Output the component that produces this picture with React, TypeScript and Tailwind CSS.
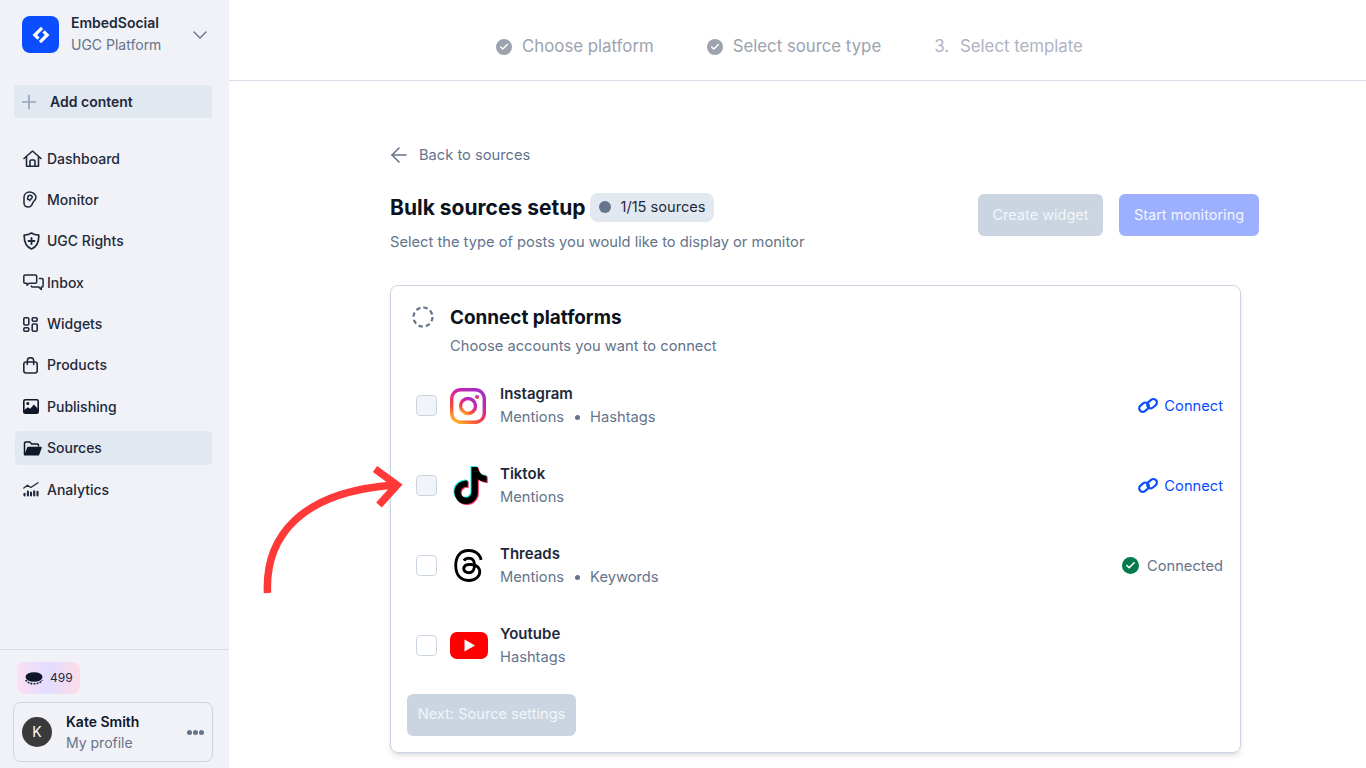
import React from "react";
import { ChevronDown, Plus, ArrowLeft, Check } from "lucide-react";
import { FaThreads, FaTiktok } from "react-icons/fa6";

const ink = "#1e293b";
const Home = () => (
  <svg width="19" height="18" viewBox="0 0 19 18" fill="none" stroke={ink} strokeWidth="1.6" strokeLinejoin="round" strokeLinecap="round">
    <path d="M1 8.500 9.500 1 18 8.500" />
    <path d="M3.500 7v9.200h12V7" />
    <path d="M7 16.200v-5a1.200 1.200 0 0 1 1.200-1.200h2.600a1.200 1.200 0 0 1 1.200 1.200v5" />
  </svg>
);
const EarIcon = () => (
  <svg width="14" height="17" viewBox="0 0 14 17" fill="none" stroke={ink} strokeWidth="1.500" strokeLinecap="round" strokeLinejoin="round">
    <path d="M1 6.500C1 3 3.500 1 6.500 1 10 1 13 3.500 13 6.500c0 2.500-1.800 3-3 4.800C9 13 9 16 5.500 16 3 16 1 14.500 1 12z" />
    <path d="M4.600 7.500C4.600 5.500 5.600 4.300 7 4.300c1.300 0 2.200.9 2.200 2 0 1.500-2.200 1.700-2.400 3.400M4.600 8.500h1.200" />
  </svg>
);
const Shield = () => (
  <svg width="17" height="18" viewBox="0 0 17 18" fill="none" stroke={ink} strokeWidth="1.700" strokeLinecap="round" strokeLinejoin="round">
    <path d="M8.500 1C6.300 2.500 4 3 1.200 3.100 1 9.800 2.800 14.600 8.500 17c5.700-2.400 7.500-7.200 7.300-13.900C13 3 10.700 2.500 8.500 1z" />
    <path d="M8.500 6v6M5.500 9h6" strokeWidth="1.900" />
  </svg>
);
const Inbox = () => (
  <svg width="21" height="17" viewBox="0 0 21 17" fill="none" stroke={ink} strokeWidth="1.500" strokeLinejoin="round" strokeLinecap="round">
    <path d="M2 1h10.500A1.200 1.200 0 0 1 13.700 2.200V8a1.200 1.200 0 0 1-1.200 1.200H6.300L4 11.300V9.200H2A1.200 1.200 0 0 1 .8 8V2.200A1.200 1.200 0 0 1 2 1z" />
    <path d="M16.500 4.500h2.400a1.200 1.200 0 0 1 1.200 1.200v6.200a1.200 1.200 0 0 1-1.200 1.200h-.6v2.400L15.800 13.100H9.500a1.200 1.200 0 0 1-1.200-1" />
  </svg>
);
const Widgets = () => (
  <svg width="15" height="15" viewBox="0 0 15 15" fill="none" stroke={ink} strokeWidth="1.600">
    <rect x="0.800" y="0.800" width="5" height="7.200" rx="1.200" />
    <rect x="0.800" y="10.700" width="5" height="3.500" rx="1.200" />
    <rect x="9.200" y="0.800" width="5" height="3.500" rx="1.200" />
    <rect x="9.200" y="7" width="5" height="7.200" rx="1.200" />
  </svg>
);
const Bag = () => (
  <svg width="15" height="17" viewBox="0 0 15 17" fill="none" stroke={ink} strokeWidth="1.600" strokeLinejoin="round">
    <rect x="0.800" y="5" width="13.400" height="11" rx="2.200" />
    <path d="M4.300 7.500V3.800a3.200 3.200 0 0 1 6.400 0v3.700" strokeLinecap="round" />
  </svg>
);
const Publishing = () => (
  <svg width="16" height="15" viewBox="0 0 16 15">
    <rect x="0.800" y="0.800" width="14.400" height="13.400" rx="1.400" fill="none" stroke="#0f172a" strokeWidth="1.600" />
    <circle cx="4.800" cy="4.600" r="1.500" fill="#0f172a" />
    <path d="M1 14v-2.800l3.800-2.900 2.300 1.500L11 5.500l4 4.500v4z" fill="#0f172a" />
  </svg>
);
const FolderOpen = () => (
  <svg width="19" height="15" viewBox="0 0 19 15">
    <path d="M1.500 14V2.200C1.500 1.500 2 1 2.700 1h4l2 2h5.600c.7 0 1.200.5 1.200 1.200V5.400" fill="none" stroke="#0f172a" strokeWidth="1.500" />
    <path d="M1 14.500 4.200 6.400c.1-.4.500-.6.900-.6h12.800c.6 0 1 .6.800 1.100l-2.600 7c-.1.400-.5.600-.9.600z" fill="#0f172a" />
  </svg>
);
const Analytics = () => (
  <svg width="16" height="15" viewBox="0 0 16 15" fill="none" stroke={ink} strokeLinecap="round">
    <path d="M.8 6 4.500 3.200 7.800 5.500 15 .8" strokeWidth="1.300" />
    <path d="M1.500 11.800v1.700M4.900 9.500v4M8 10.500v3M11.200 9.200v4.300M14.500 9.800v3.700" strokeWidth="2.100" />
  </svg>
);
const Logo = () => (
  <div className="w-[37px] h-[37px] rounded-lg bg-[#0b4dff] flex items-center justify-center shrink-0">
    <svg width="20" height="20" viewBox="0 0 20 20" fill="none" stroke="#ffffff" strokeWidth="3.200">
      <path d="M11 2.800 3.800 10 7.500 13.700" />
      <path d="M9 17.200 16.200 10 12.500 6.300" />
    </svg>
  </div>
);
const ChainLink = () => (
  <svg width="22" height="17" viewBox="0 0 22 17" fill="none" stroke="#0b4dff" strokeWidth="2.200">
    <rect x="1.800" y="6.800" width="10.500" height="7" rx="3.500" transform="rotate(-40 7 10.300)" />
    <rect x="9.800" y="3.200" width="10.500" height="7" rx="3.500" transform="rotate(-40 15 6.700)" />
  </svg>
);

const nav = [
  { label: "Dashboard", icon: <Home /> },
  { label: "Monitor", icon: <EarIcon /> },
  { label: "UGC Rights", icon: <Shield /> },
  { label: "Inbox", icon: <Inbox /> },
  { label: "Widgets", icon: <Widgets /> },
  { label: "Products", icon: <Bag /> },
  { label: "Publishing", icon: <Publishing /> },
  { label: "Sources", icon: <FolderOpen />, active: true },
  { label: "Analytics", icon: <Analytics /> },
];

const Dot = () => <span className="w-[5px] h-[5px] rounded-full bg-[#64748b] mx-[10.500px] inline-block" />;

const StepCheck = () => (
  <span className="w-4 h-4 rounded-full bg-[#9ca3af] flex items-center justify-center shrink-0">
    <Check size={10} strokeWidth={3.500} color="#ffffff" />
  </span>
);

const Instagram = () => (
  <svg width="36" height="36" viewBox="0 0 36 36" fill="none" className="-ml-[2px]">
    <defs>
      <linearGradient id="ig" x1="0.150" y1="1" x2="0.750" y2="0">
        <stop offset="0" stopColor="#fdb32b" />
        <stop offset="0.300" stopColor="#f8483c" />
        <stop offset="0.650" stopColor="#d6249f" />
        <stop offset="1" stopColor="#a52cc5" />
      </linearGradient>
    </defs>
    <rect x="1.700" y="1.700" width="32.600" height="32.600" rx="9" stroke="url(#ig)" strokeWidth="3.400" />
    <circle cx="18" cy="18" r="7.500" stroke="url(#ig)" strokeWidth="3.400" />
    <circle cx="27" cy="9" r="2.100" fill="url(#ig)" />
  </svg>
);
const Tiktok = () => (
  <span className="relative block w-[36px] h-[39px]">
    <FaTiktok size={37} color="#25f4ee" className="absolute left-0 top-0" />
    <FaTiktok size={37} color="#fe2c55" className="absolute left-[2px] top-[2px]" />
    <FaTiktok size={37} color="#000000" className="absolute left-[1px] top-[1px]" />
  </span>
);
const Youtube = () => (
  <svg width="38" height="27" viewBox="0 0 38 27">
    <rect width="38" height="27" rx="7" fill="#ff0000" />
    <path d="M14.500 7.500v12l10.500-6z" fill="#ffffff" />
  </svg>
);

const rows = [
  { name: "Instagram", subs: ["Mentions", "Hashtags"], icon: <Instagram />, filled: true, status: "connect" },
  { name: "Tiktok", subs: ["Mentions"], icon: <Tiktok />, filled: true, status: "connect" },
  { name: "Threads", subs: ["Mentions", "Keywords"], icon: <FaThreads size={35} color="#000000" className="-ml-[2px]" />, filled: false, status: "connected" },
  { name: "Youtube", subs: ["Hashtags"], icon: <Youtube />, filled: false, status: "none" },
];

export default function App() {
  return (
    <div className="relative flex w-[1366px] h-[768px] overflow-hidden bg-white text-[#0f172a] [font-family:Inter,sans-serif]">
      <aside className="w-[229px] shrink-0 bg-[#f0f2f7] flex flex-col">
        <div className="flex items-start pl-[22px] pr-[17px] pt-4 h-[69px]">
          <Logo />
          <div className="ml-3 flex-1 -mt-[4px]">
            <div className="text-sm font-semibold leading-[22px] text-[#1e293b]">EmbedSocial</div>
            <div className="text-sm leading-[22px] text-[#64748b]">UGC Platform</div>
          </div>
          <ChevronDown size={24} strokeWidth={1.400} color="#64748b" className="mt-[7px]" />
        </div>
        <div className="mx-[14px] mt-4 h-[33px] w-[198px] rounded bg-[#e2e8f0] flex items-center pl-[4px]">
          <Plus size={22} strokeWidth={1.800} color="#94a3b8" />
          <span className="ml-[10px] text-sm font-semibold text-[#1e293b]">Add content</span>
        </div>
        <nav className="mt-[23.500px] ml-[15px] w-[197px] flex flex-col gap-[7.400px]">
          {nav.map((n) => (
            <div key={n.label} className={`h-[34px] rounded flex items-center pl-2 ${n.active ? "bg-[#e2e8f0]" : ""}`}>
              <span className="w-[24px] flex items-center">{n.icon}</span>
              <span className="text-sm font-medium text-[#1e293b]">{n.label}</span>
            </div>
          ))}
        </nav>
        <div className="mt-auto border-t border-[#d5dce6] pt-3 pb-[6px] pl-[13px]">
          <div className="ml-1 w-[63px] h-8 rounded-lg bg-gradient-to-r from-[#fbdff5] via-[#e2dcff] to-[#fddde8] flex items-center pl-2 gap-[7px]">
            <svg width="18" height="13" viewBox="0 0 18 13">
              <ellipse cx="9" cy="5" rx="8.500" ry="4.800" fill="#0f172a" />
              <path d="M.8 8c1 2.300 4.200 3.800 8.200 3.800s7.200-1.500 8.200-3.800" fill="none" stroke="#0f172a" strokeWidth="1.600" strokeDasharray="1.800 1.200" />
            </svg>
            <span className="text-xs text-[#1e293b]">499</span>
          </div>
          <div className="mt-2 w-[200px] h-[60px] rounded-lg border border-[#cbd5e1] flex items-center pl-2 pr-2">
            <div className="w-[30px] h-[30px] rounded-full bg-[#3a3a3a] text-white text-sm flex items-center justify-center">K</div>
            <div className="ml-[14px] flex-1">
              <div className="text-sm font-semibold leading-[21px]">Kate Smith</div>
              <div className="text-sm leading-[21px] text-[#64748b]">My profile</div>
            </div>
            <span className="flex gap-px">
              <span className="w-[5px] h-[5px] rounded-full bg-[#64748b]" />
              <span className="w-[5px] h-[5px] rounded-full bg-[#64748b]" />
              <span className="w-[5px] h-[5px] rounded-full bg-[#64748b]" />
            </span>
          </div>
        </div>
      </aside>

      <main className="flex-1 min-w-0">
        <header className="h-[81px] pt-[14px] border-b border-[#d8dce8] flex items-center justify-center pr-4 gap-[53px] text-[16.800px] text-[#9ca3af]">
          <div className="flex items-center gap-[10px]"><StepCheck /><span>Choose platform</span></div>
          <div className="flex items-center gap-[10px]"><StepCheck /><span>Select source type</span></div>
          <div className="flex items-center gap-[11px] text-[#aeb3bf]"><span>3.</span><span>Select template</span></div>
        </header>
        <div className="pl-[161px] pr-[107px]">
          <div className="mt-[63px] h-[22px] flex items-center gap-2 text-[14.700px] text-[#64748b]">
            <ArrowLeft size={24} strokeWidth={1.600} color="#64748b" className="-ml-[3px]" />
            <span>Back to sources</span>
          </div>
          <div className="mt-[26px] flex justify-between items-start">
            <div>
              <div className="flex items-center gap-[5px] h-[30px]">
                <h1 className="pt-[2px] text-[21px] font-[650] text-[#0b1220]">Bulk sources setup</h1>
                <span className="h-[29px] w-[124px] rounded-lg bg-[#e2e8f0] flex items-center pl-[9px] gap-[9px] text-[14.600px] text-[#1e293b]">
                  <span className="w-[12px] h-[12px] rounded-full bg-[#64748b]" />
                  <span className="pt-[2px]">1/15 sources</span>
                </span>
              </div>
              <p className="mt-[10px] text-[14.700px] leading-5 text-[#64748b]">Select the type of posts you would like to display or monitor</p>
            </div>
            <div className="flex gap-4 mt-[2px]">
              <button className="h-[42px] w-[125px] rounded-md bg-[#cbd5e1] text-[14.500px] text-[#f1f5f9]">Create widget</button>
              <button className="h-[42px] w-[140px] rounded-md bg-[#9cb0ff] text-[14.500px] text-[#f1f5ff]">Start monitoring</button>
            </div>
          </div>
          <section className="mt-[33px] w-[851px] h-[468px] rounded-lg border border-[#cbd5e1] shadow-md px-4 pt-[19px]">
            <div className="flex items-center h-6">
              <svg width="22" height="22" viewBox="0 0 22 22" className="ml-[5px]" fill="none">
                <circle cx="11" cy="11" r="9.500" stroke="#64748b" strokeWidth="2.200" strokeDasharray="4.500 2.960" />
              </svg>
              <h2 className="pt-[2px] ml-[16px] text-[18.900px] font-[650] text-[#0b1220]">Connect platforms</h2>
            </div>
            <p className="ml-[43px] mt-[7px] text-[14.700px] text-[#64748b] leading-5">Choose accounts you want to connect</p>
            <div className="mt-[10px]">
              {rows.map((r) => (
                <div key={r.name} className="h-[80px] flex items-center pr-px">
                  <span className={`ml-[9px] -mt-px w-[21px] h-[21px] rounded border border-[#cbd5e1] shrink-0 ${r.filled ? "bg-[#f1f5f9]" : "bg-white"}`} />
                  <span className="ml-[13px] -mt-px w-[38px] flex items-center justify-center shrink-0">{r.icon}</span>
                  <div className="ml-[12px] flex-1">
                    <div className="h-[23px] text-[15px] font-semibold leading-[21px] text-[#1e293b]">{r.name}</div>
                    <div className="text-[14.700px] leading-[23px] text-[#64748b] flex items-center">
                      {r.subs.map((s, i) => (
                        <React.Fragment key={s}>
                          {i > 0 && <Dot />}
                          <span>{s}</span>
                        </React.Fragment>
                      ))}
                    </div>
                  </div>
                  {r.status === "connected" && (
                    <div className="flex items-center gap-2 text-[14.700px] text-[#64748b]">
                      <span className="w-[17px] h-[17px] rounded-full bg-[#047a4f] flex items-center justify-center">
                        <Check size={11} strokeWidth={3.500} color="#ffffff" />
                      </span>
                      Connected
                    </div>
                  )}
                  {r.status === "connect" && (
                    <div className="flex items-center gap-[5px] text-[14.700px] text-[#0b4dff]">
                      <ChainLink />
                      Connect
                    </div>
                  )}
                </div>
              ))}
            </div>
            <button className="mt-[8px] h-[42px] w-[169px] rounded-md bg-[#cbd5e1] text-[14.600px] text-[#f1f5f9]">Next: Source settings</button>
          </section>
        </div>
      </main>

      <svg className="absolute left-[260px] top-[465px] pointer-events-none" width="145" height="130" viewBox="0 0 145 130" fill="none" stroke="#ff3838" strokeWidth="7.500">
        <path d="M7.500 128C5 72 40 27 134 20" />
        <path d="M115 4 137 20 119 40" />
      </svg>
    </div>
  );
}
